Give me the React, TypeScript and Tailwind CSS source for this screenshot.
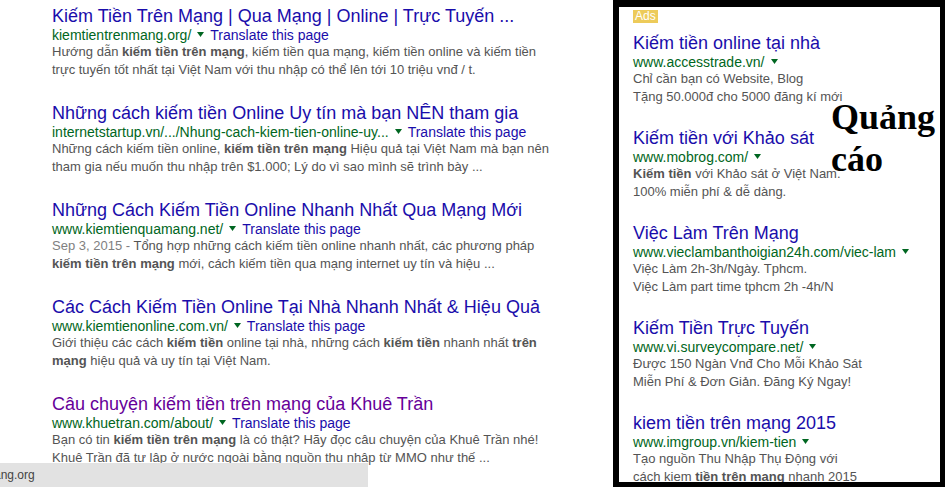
import React from "react";

const Arrow = () => (
  <svg width="7" height="5" viewBox="0 0 7 5" className="inline-block mx-[6px] mb-[2px]">
    <path d="M0 0 L7 0 L3.5 5 Z" fill="#006621" />
  </svg>
);

type Seg = string | { b: string } | { d: string };

const renderSegs = (segs: Seg[]) =>
  segs.map((s, i) =>
    typeof s === "string" ? (
      <span key={i}>{s}</span>
    ) : "b" in s ? (
      <b key={i} className="font-bold text-[#545454]">{s.b}</b>
    ) : (
      <span key={i} className="text-[#808080]">{s.d}</span>
    )
  );

type Result = {
  title: string;
  url: string;
  visited?: boolean;
  lines: Seg[][];
};

const results: Result[] = [
  {
    title: "Kiếm Tiền Trên Mạng | Qua Mạng | Online | Trực Tuyến ...",
    url: "kiemtientrenmang.org/",
    lines: [
      ["Hướng dẫn ", { b: "kiếm tiền trên mạng" }, ", kiếm tiền qua mạng, kiếm tiền online và kiếm tiền"],
      ["trực tuyến tốt nhất tại Việt Nam với thu nhập có thể lên tới 10 triệu vnđ / t."],
    ],
  },
  {
    title: "Những cách kiếm tiền Online Uy tín mà bạn NÊN tham gia",
    url: "internetstartup.vn/.../Nhung-cach-kiem-tien-online-uy...",
    lines: [
      ["Những cách kiếm tiền online, ", { b: "kiếm tiền trên mạng" }, " Hiệu quả tại Việt Nam mà bạn nên"],
      ["tham gia nếu muốn thu nhập trên $1.000; Lý do vì sao mình sẽ trình bày ..."],
    ],
  },
  {
    title: "Những Cách Kiếm Tiền Online Nhanh Nhất Qua Mạng Mới",
    url: "www.kiemtienquamang.net/",
    lines: [
      [{ d: "Sep 3, 2015 - " }, "Tổng hợp những cách kiếm tiền online nhanh nhất, các phương pháp"],
      [{ b: "kiếm tiền trên mạng" }, " mới, cách kiếm tiền qua mạng internet uy tín và hiệu ..."],
    ],
  },
  {
    title: "Các Cách Kiếm Tiền Online Tại Nhà Nhanh Nhất & Hiệu Quả",
    url: "www.kiemtienonline.com.vn/",
    lines: [
      ["Giới thiệu các cách ", { b: "kiếm tiền" }, " online tại nhà, những cách ", { b: "kiếm tiền" }, " nhanh nhất ", { b: "trên" }],
      [{ b: "mạng" }, " hiệu quả và uy tín tại Việt Nam."],
    ],
  },
  {
    title: "Câu chuyện kiếm tiền trên mạng của Khuê Trần",
    url: "www.khuetran.com/about/",
    visited: true,
    lines: [
      ["Bạn có tin ", { b: "kiếm tiền trên mạng" }, " là có thật? Hãy đọc câu chuyện của Khuê Trần nhé!"],
      ["Khuê Trần đã tự lập ở nước ngoài bằng nguồn thu nhập từ MMO như thế ..."],
    ],
  },
];

type Ad = { title: string; url: string; lines: Seg[][] };

const ads: Ad[] = [
  {
    title: "Kiếm tiền online tại nhà",
    url: "www.accesstrade.vn/",
    lines: [["Chỉ cần bạn có Website, Blog"], ["Tặng 50.000đ cho 5000 đăng kí mới"]],
  },
  {
    title: "Kiếm tiền với Khảo sát",
    url: "www.mobrog.com/",
    lines: [[{ b: "Kiếm tiền" }, " với Khảo sát ở Việt Nam."], ["100% miễn phí & dễ dàng."]],
  },
  {
    title: "Việc Làm Trên Mạng",
    url: "www.vieclambanthoigian24h.com/viec-lam",
    lines: [["Việc Làm 2h-3h/Ngày. Tphcm."], ["Việc Làm part time tphcm 2h -4h/N"]],
  },
  {
    title: "Kiếm Tiền Trực Tuyến",
    url: "www.vi.surveycompare.net/",
    lines: [["Được 150 Ngàn Vnđ Cho Mỗi Khảo Sát"], ["Miễn Phí & Đơn Giản. Đăng Ký Ngay!"]],
  },
  {
    title: "kiem tiền trên mạng 2015",
    url: "www.imgroup.vn/kiem-tien",
    lines: [["Tạo nguồn Thu Nhập Thụ Động với"], ["cách kiem ", { b: "tiền trên mạng" }, " nhanh 2015"]],
  },
];

export default function App() {
  return (
    <div
      className="relative w-[945px] h-[487px] overflow-hidden bg-white flex"
      style={{ fontFamily: '"Liberation Sans", Arial, sans-serif' }}
    >
      {/* Organic results */}
      <div className="w-[613px] shrink-0 pl-[52px] pt-[5px] flex flex-col gap-[23px] whitespace-nowrap">
        {results.map((r, i) => (
          <div key={i} className="flex flex-col">
            <div className={`text-[18px] leading-[22px] ${r.visited ? "text-[#660099]" : "text-[#1a0dab]"}`}>
              {r.title}
            </div>
            <div className="text-[14px] leading-[16px] text-[#006621] flex items-center">
              <span>{r.url}</span>
              <Arrow />
              <span className="text-[#1a0dab]">Translate this page</span>
            </div>
            <div className="text-[13px] leading-[18px] text-[#545454]">
              {r.lines.map((l, j) => (
                <div key={j}>{renderSegs(l)}</div>
              ))}
            </div>
          </div>
        ))}
      </div>

      {/* Ads panel */}
      <div className="w-[332px] shrink-0 h-[487px] border-black border-l-[6px] border-t-[7px] border-r-[5px] border-b-[5px] bg-white pl-[14px] pt-[3px] whitespace-nowrap overflow-hidden flex flex-col">
        <div className="w-fit bg-[#edcb5a] text-white text-[12px] leading-[13px] px-[2px]">Ads</div>
        <div className="flex flex-col gap-[21px] mt-[9px]">
          {ads.map((a, i) => (
            <div key={i} className="flex flex-col">
              <div className="text-[18px] leading-[22px] text-[#1a0dab]">{a.title}</div>
              <div className="text-[14px] leading-[16px] text-[#006621] flex items-center">
                <span>{a.url}</span>
                <Arrow />
              </div>
              <div className="text-[13px] leading-[18px] text-[#545454]">
                {a.lines.map((l, j) => (
                  <div key={j}>{renderSegs(l)}</div>
                ))}
              </div>
            </div>
          ))}
        </div>
      </div>

      {/* Label overlay */}
      <div
        className="absolute left-[831px] top-[96px] text-black font-bold text-[36px] leading-[42px]"
        style={{ fontFamily: '"Liberation Serif", "Times New Roman", serif' }}
      >
        Quảng
        <br />
        cáo
      </div>

      {/* Status bar overlay */}
      <div className="absolute left-0 bottom-0 w-[368px] h-[24px] bg-[#e2e2e2] text-[12px] leading-[24px] text-[#444] overflow-hidden whitespace-nowrap">
        <span className="ml-[-6px]">ang.org</span>
      </div>
    </div>
  );
}
